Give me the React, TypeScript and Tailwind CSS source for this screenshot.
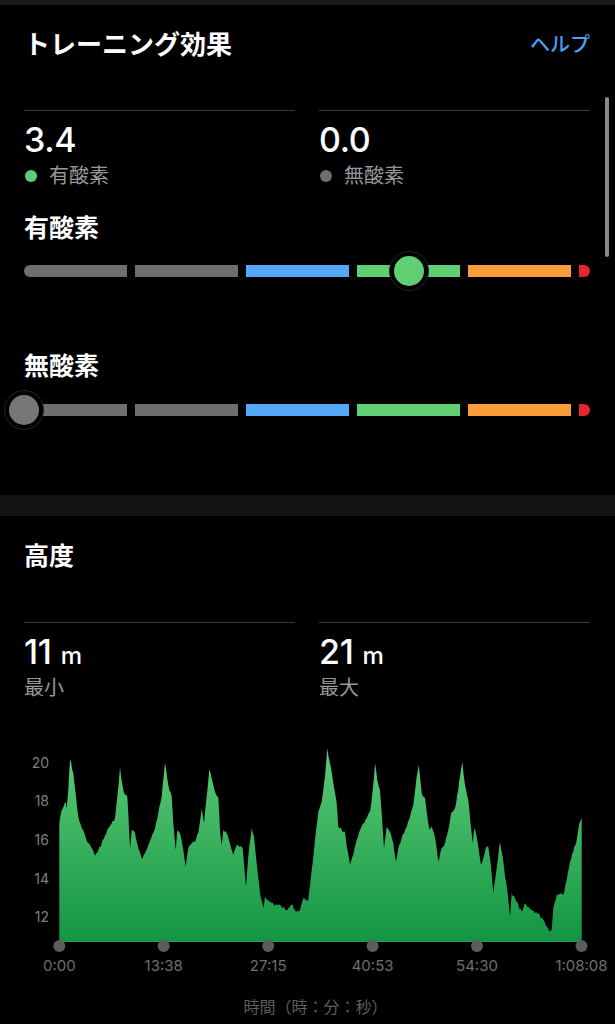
import React from "react";

const PTS: [number, number][] = [
  [59.3, 93.3], [61.7, 80], [65, 71.7], [66.7, 78.3], [68.3, 60], [70, 29.3], [73.3, 43.3], [76, 66.7],
  [78.3, 86.7], [81.7, 98.3], [85, 105], [88.3, 113.3], [91.7, 118.3], [95, 126], [98.3, 120],
  [101.7, 113.3], [105, 105], [108.3, 98.3], [111.7, 93.3], [115, 88.3], [117.3, 66.7], [120, 37.3],
  [122.7, 56.7], [125, 65], [127.3, 66.7], [128.3, 83.3], [130, 118.3], [131.7, 100], [135, 103.3],
  [138.3, 118.3], [141.7, 128.3], [145, 123.3], [148.3, 115], [151.7, 106.7], [155, 98.3], [158.3, 83.3],
  [161.7, 66.7], [165, 32.7], [168.3, 55], [171.7, 66.7], [173.3, 93.3], [175.7, 120], [177.3, 100],
  [180, 103.3], [182.7, 116.7], [185.7, 136.7], [188.3, 118.3], [191.7, 113.3], [195, 111.7],
  [198.3, 103.3], [201.7, 78.3], [204, 93.3], [206.7, 66.7], [209.3, 39], [212, 50], [215, 61.7],
  [218.3, 66.7], [220, 100], [221.7, 115], [223.3, 100], [226.7, 103.3], [230, 113.3], [233.3, 125],
  [236.7, 115], [240, 116.7], [242.7, 118.3], [246, 156.7], [248.3, 126.7], [251.7, 98.3], [254, 106.7],
  [256.7, 133.3], [260, 163.3], [263.3, 178.3], [265, 166.7], [268.3, 170], [271.7, 173.3], [276.7, 175],
  [281.7, 176.7], [286.7, 180], [291.7, 175], [296.7, 181.7], [300, 180], [303.3, 168.3], [308.3, 170],
  [311.7, 140], [315, 110], [318.3, 81.7], [321.7, 71.7], [325, 46.7], [327.3, 18.3], [330, 33.3],
  [333.3, 53.3], [336.7, 73.3], [338.3, 96.7], [341.7, 100], [345, 101.7], [346.7, 116.7], [350, 135],
  [353.3, 125], [356.7, 110], [360, 100], [363.3, 93.3], [366.7, 88.3], [370, 81.7], [372.7, 60],
  [375, 33.3], [377.3, 50], [380, 60], [381.7, 83.3], [384, 118.3], [386.7, 96.7], [390, 101.7],
  [393.3, 113.3], [396, 131.7], [398.3, 118.3], [401.7, 108.3], [405, 100], [410, 86.7], [413.3, 75],
  [416.7, 46.7], [418.7, 35], [421.7, 63.3], [425, 68.3], [428.3, 93.3], [430, 100], [431.7, 96.7],
  [434, 103.3], [436, 113.3], [438.3, 131.7], [441.7, 118.3], [445, 113.3], [448.3, 100], [451.7, 81.7],
  [455, 78.3], [458.3, 60], [460, 46.7], [462.3, 31.7], [465, 55], [468.3, 70], [470.7, 95], [472.7, 113.3],
  [474.3, 98.3], [476.7, 106.7], [479, 121.7], [481, 135], [483.3, 128.3], [485.7, 118.3], [488.3, 116.7],
  [490.7, 133.3], [493.3, 163.3], [496.7, 138.3], [500, 111.7], [502.7, 126.7], [505, 146.7], [507.3, 160],
  [510, 186.7], [511.7, 163.3], [515, 168.3], [518.3, 175], [521.7, 181.7], [525, 173.3], [528.3, 176.7],
  [531.7, 180], [535, 183.3], [538.3, 183.3], [540.7, 188.3], [543.3, 190], [546.7, 196.7], [549.3, 201.7],
  [551.7, 200], [553.3, 178.3], [556.7, 165], [560, 163.3], [563.3, 165], [566.7, 150], [570, 131.7],
  [573.3, 121.7], [576.7, 110], [579.3, 93.3], [581.7, 88.3],
];

function buildPath(): string {
  let s = 12345;
  const rnd = () => {
    s = (s * 16807) % 2147483647;
    return s / 2147483647;
  };
  let d = `M59.3 212 L${PTS[0][0]} ${PTS[0][1]}`;
  for (let i = 1; i < PTS.length; i++) {
    const [x0, y0] = PTS[i - 1];
    const [x1, y1] = PTS[i];
    const n = Math.max(1, Math.round((x1 - x0) / 1.1));
    for (let k = 1; k <= n; k++) {
      const t = k / n;
      const x = x0 + (x1 - x0) * t;
      const y = y0 + (y1 - y0) * t + (k < n ? (rnd() - 0.5) * 3.2 : 0);
      d += ` L${x.toFixed(1)} ${y.toFixed(1)}`;
    }
  }
  d += " L581.7 212 Z";
  return d;
}

const CHART_PATH = buildPath();

const FONT = "font-['Inter','Noto_Sans_CJK_JP',sans-serif]";

function Bar({ knobLeft, knobColor }: { knobLeft: string; knobColor: string }) {
  return (
    <div className="relative h-[40px] flex items-center">
      <div className="flex w-full h-[12px] gap-[8px]">
        <div className="flex-1 rounded-l-full bg-[#6e6e6e]" />
        <div className="flex-1 bg-[#6e6e6e]" />
        <div className="flex-1 bg-[#55a7f8]" />
        <div className="flex-1 bg-[#60cf73]" />
        <div className="flex-1 bg-[#f99c3a]" />
        <div className="w-[11px] rounded-r-full bg-[#e2282d]" />
      </div>
      <div
        className={`absolute top-1/2 -translate-y-1/2 -translate-x-1/2 w-[40px] h-[40px] rounded-full bg-black border border-[#232323] flex items-center justify-center ${knobLeft}`}
      >
        <div className={`w-[30px] h-[30px] rounded-full ${knobColor}`} />
      </div>
    </div>
  );
}

function Stat({ value, unit, label, dot }: { value: string; unit?: string; label: string; dot?: string }) {
  return (
    <div className="border-t border-[#3a3a3c]">
      <div className="mt-[9px] h-[40px] flex items-baseline leading-[40px] text-white">
        <span className="text-[34px] font-medium tracking-[-0.3px]">{value}</span>
        {unit && <span className="ml-[9px] text-[24px] font-medium">{unit}</span>}
      </div>
      <div className="mt-[4px] h-[24px] flex items-center text-[20px] leading-[24px] text-[#98989d]">
        {dot && <span className={`w-[12px] h-[12px] rounded-full ml-[1px] mr-[12px] ${dot}`} />}
        <span>{label}</span>
      </div>
    </div>
  );
}

export default function App() {
  const ticks = [
    { x: 59.3, t: "0:00" },
    { x: 163.7, t: "13:38" },
    { x: 268.2, t: "27:15" },
    { x: 372.6, t: "40:53" },
    { x: 477, t: "54:30" },
    { x: 581.5, t: "1:08:08" },
  ];
  const yl = [
    { y: 32.3, t: "20" },
    { y: 70.9, t: "18" },
    { y: 109.5, t: "16" },
    { y: 148.1, t: "14" },
    { y: 186.7, t: "12" },
  ];
  return (
    <div className={`relative w-[615px] h-[1024px] overflow-hidden bg-black ${FONT}`}>
      <div className="h-[5px] bg-[#1b1b1b]" />

      {/* Training effect */}
      <section className="pl-[24px] pr-[25px] pb-[65px]">
        <div className="h-[80px] flex items-center justify-between">
          <h1 className="text-[26px] font-bold text-white leading-none">トレーニング効果</h1>
          <span className="text-[20px] font-medium text-[#4ca1ef] leading-none">ヘルプ</span>
        </div>
        <div className="mt-[25px] grid grid-cols-2 gap-x-[24px]">
          <Stat value="3.4" label="有酸素" dot="bg-[#60cf73]" />
          <Stat value="0.0" label="無酸素" dot="bg-[#6e6e6e]" />
        </div>
        <h2 className="mt-[26px] h-[30px] flex items-center text-[25px] font-bold text-white">有酸素</h2>
        <div className="mt-[7px]">
          <Bar knobLeft="left-[385px]" knobColor="bg-[#60cf73]" />
        </div>
        <h2 className="mt-[61px] h-[30px] flex items-center text-[25px] font-bold text-white">無酸素</h2>
        <div className="mt-[8px]">
          <Bar knobLeft="left-[0px]" knobColor="bg-[#767676]" />
        </div>
      </section>

      <div className="h-[21px] bg-[#141414]" />

      {/* Altitude */}
      <section>
        <div className="pl-[24px] pr-[25px]">
          <h2 className="pt-[26px] h-[56px] flex items-end">
            <span className="h-[30px] flex items-center text-[25px] font-bold text-white">高度</span>
          </h2>
          <div className="mt-[50px] grid grid-cols-2 gap-x-[24px]">
            <Stat value="11" unit="m" label="最小" />
            <Stat value="21" unit="m" label="最大" />
          </div>
        </div>
        <svg className="mt-[30px] block" width="615" height="294" viewBox="0 0 615 294">
          <defs>
            <linearGradient id="g" x1="0" y1="18" x2="0" y2="212" gradientUnits="userSpaceOnUse">
              <stop offset="0" stopColor="#5ccb76" />
              <stop offset="1" stopColor="#139544" />
            </linearGradient>
          </defs>
          {yl.map((l) => (
            <text
              key={l.t}
              x="49"
              y={l.y}
              textAnchor="end"
              dominantBaseline="central"
              fontSize="14"
              fill="#7f7f7f"
              fontFamily="Inter, sans-serif"
            >
              {l.t}
            </text>
          ))}
          <path d={CHART_PATH} fill="url(#g)" />
          <line x1="59.3" y1="211.5" x2="581.7" y2="211.5" stroke="#1fa34f" strokeWidth="1" />
          {ticks.map((tk) => (
            <g key={tk.t}>
              <circle cx={tk.x} cy="216" r="6" fill="#5c5c5c" />
              <text
                x={tk.x}
                y="235.5"
                textAnchor="middle"
                dominantBaseline="central"
                fontSize="15"
                fill="#6f6f6f"
                fontFamily="Inter, sans-serif"
              >
                {tk.t}
              </text>
            </g>
          ))}
          <text
            x="315.5"
            y="276"
            textAnchor="middle"
            dominantBaseline="central"
            fontSize="16"
            fill="#5e5e5e"
            fontFamily="'Noto Sans CJK JP', sans-serif"
          >
            時間（時：分：秒）
          </text>
        </svg>
      </section>

      <div className="absolute right-[6px] top-[97px] w-[4px] h-[160px] rounded-full bg-[#8a8a8a]" />
    </div>
  );
}
